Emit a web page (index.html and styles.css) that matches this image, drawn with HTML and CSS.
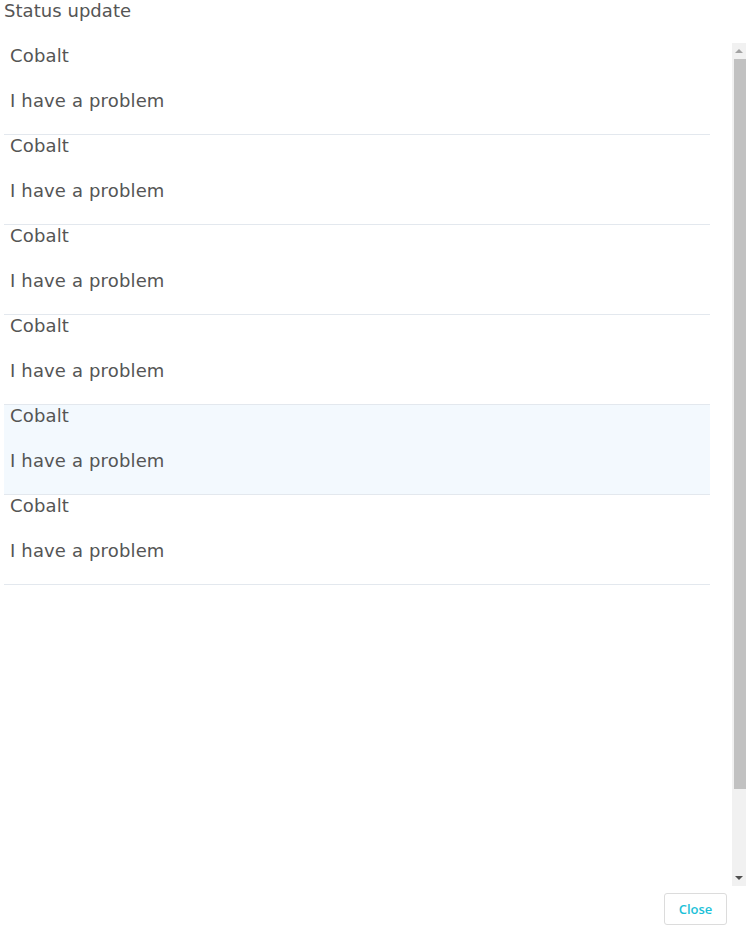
FILE: index.html
```html
<!DOCTYPE html>
<html>
<head>
<meta charset="utf-8">
<link rel="stylesheet" href="styles.css">
</head>
<body>
<div class="dialog">
  <div class="title">Status update</div>
  <div class="body">
    <div class="list">
      <div class="item first"><div class="name">Cobalt</div><div class="msg">I have a problem</div></div>
      <div class="item"><div class="name">Cobalt</div><div class="msg">I have a problem</div></div>
      <div class="item"><div class="name">Cobalt</div><div class="msg">I have a problem</div></div>
      <div class="item"><div class="name">Cobalt</div><div class="msg">I have a problem</div></div>
      <div class="item hover"><div class="name">Cobalt</div><div class="msg">I have a problem</div></div>
      <div class="item"><div class="name">Cobalt</div><div class="msg">I have a problem</div></div>
    </div>
    <div class="scrollbar">
      <div class="arrow up"></div>
      <div class="track"><div class="thumb"></div></div>
      <div class="arrow down"></div>
    </div>
  </div>
  <div class="footer">
    <button class="close">Close</button>
  </div>
</div>
</body>
</html>
```
FILE: styles.css
```css
html, body { margin: 0; padding: 0; background: #fff; }
body { font-family: "DejaVu Sans", "Open Sans", sans-serif; color: #555; }
.dialog { width: 746px; height: 932px; display: flex; flex-direction: column; }
.title { font-size: 18px; letter-spacing: 0.05px; line-height: 22px; padding-left: 4px; height: 43px; }
.body { flex: 1; display: flex; padding-left: 4px; min-height: 0; }
.list { width: 706px; padding-top: 2px; }
.item { height: 89px; border-bottom: 1px solid #e3e8ee; padding-left: 6px; }
.item.hover { background: #f3f9fe; }
.name, .msg { font-size: 18px; letter-spacing: 0.15px; line-height: 22px; }
.msg { margin-top: 22px; padding-top: 1px; }
.scrollbar { margin-left: auto; width: 14px; background: #f1f1f1; display: flex; flex-direction: column; height: 843px; }
.arrow { height: 16px; display: flex; align-items: center; justify-content: center; }
.arrow::before { content: ""; width: 0; height: 0; border-left: 4px solid transparent; border-right: 4px solid transparent; }
.arrow.up::before { border-bottom: 4px solid #a3a3a3; }
.arrow.down::before { border-top: 4px solid #505050; }
.track { flex: 1; padding-left: 2px; }
.thumb { height: 730px; background: #c1c1c1; }
.footer { height: 46px; display: flex; justify-content: flex-end; align-items: flex-start; padding-top: 7px; padding-right: 19px; box-sizing: border-box; }
.close { width: 63px; height: 32px; background: #fff; border: 1px solid #dcdcdc; border-radius: 3px; color: #1cc1d8; font-family: "Open Sans", sans-serif; font-weight: 600; font-size: 13px; padding: 0; }
```
